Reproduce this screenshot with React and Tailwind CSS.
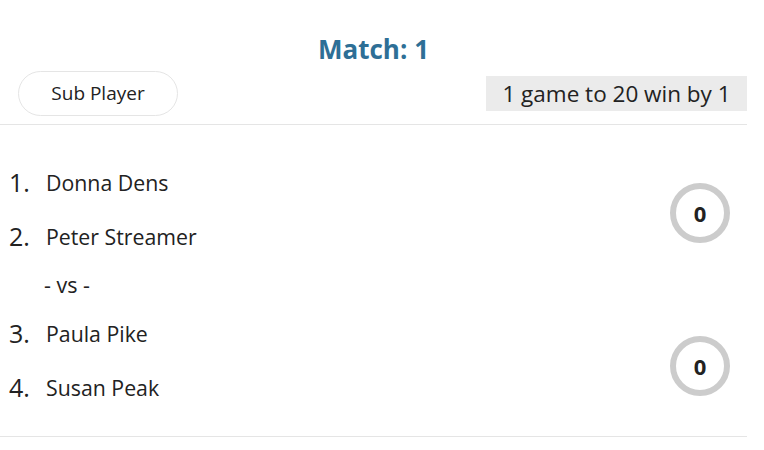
export default function App() {
  const teams = [
    [
      { n: 1, name: 'Donna Dens' },
      { n: 2, name: 'Peter Streamer' },
    ],
    [
      { n: 3, name: 'Paula Pike' },
      { n: 4, name: 'Susan Peak' },
    ],
  ]

  const Team = ({ players, score, offset }) => (
    <div className="flex items-center">
      <div className="flex-1">
        {players.map((p) => (
          <div key={p.n} className="h-[54px] flex items-center">
            <span className="w-[46px] pl-[9px] text-[25px] text-[#222]">{p.n}.</span>
            <span className="text-[21.3px] text-[#222]">{p.name}</span>
          </div>
        ))}
      </div>
      <div className={`pr-[17px] ${offset}`}>
        <div className="w-[60px] h-[60px] rounded-full border-[6px] border-[#cccccc] flex items-center justify-center">
          <span className="text-[22px] font-bold text-[#222]">{score}</span>
        </div>
      </div>
    </div>
  )

  return (
    <div className="w-[764px] h-[450px] bg-white" style={{ fontFamily: '"Open Sans", "Noto Sans", sans-serif' }}>
      <div className="w-[747px]">
        <div className="pt-[31px] text-center text-[26px] leading-[36px] font-bold text-[#2e6f96]">Match: 1</div>
        <div className="flex items-center justify-between pl-[18px] pb-[8px] mt-[4px]">
          <button className="w-[160px] h-[45px] rounded-full border border-[#e5e5e5] text-[19px] text-[#222]">
            Sub Player
          </button>
          <div className="w-[261px] h-[35px] bg-[#ebebeb] flex items-center justify-center text-[22.5px] text-[#222]">
            1 game to 20 win by 1
          </div>
        </div>
        <div className="border-t border-[#e5e5e5]" />
        <div className="pt-[31px] pb-[21px]">
          <Team players={teams[0]} score={0} offset="pt-[6px]" />
          <div className="h-[43px] flex items-center pl-[44px] text-[21.5px] text-[#222]">- vs -</div>
          <Team players={teams[1]} score={0} offset="pt-[10px]" />
        </div>
        <div className="border-t border-[#e5e5e5]" />
      </div>
    </div>
  )
}
